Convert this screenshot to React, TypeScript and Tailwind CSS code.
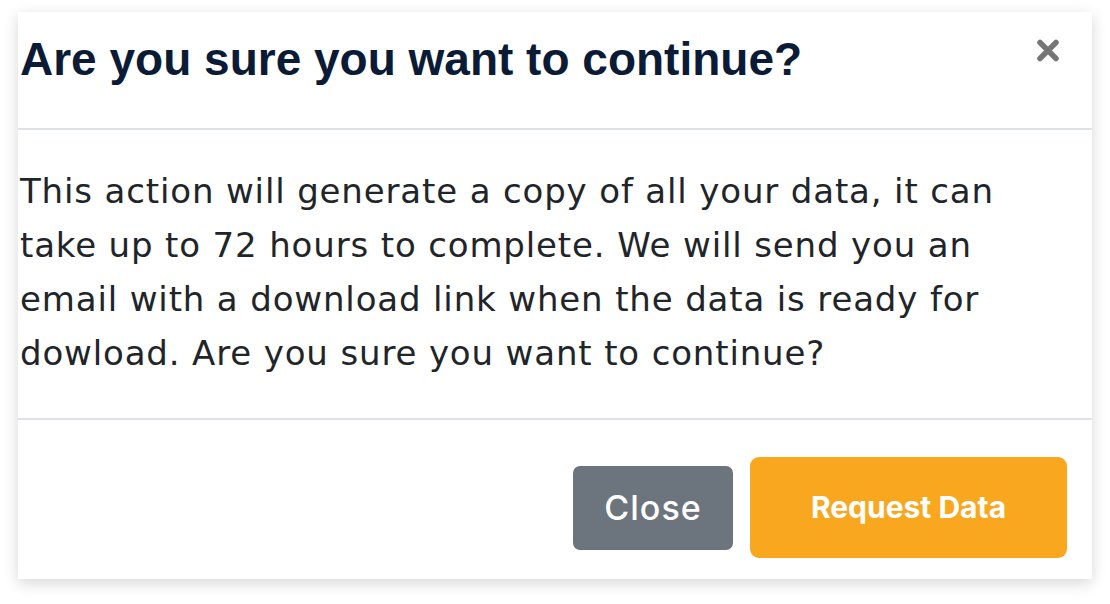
import React from "react";

function CloseIcon() {
  return (
    <svg width="26" height="25" viewBox="0 0 26 25" className="block">
      <path
        d="M5 4.5 L21 20.5 M21 4.5 L5 20.5"
        stroke="#767676"
        strokeWidth="5.5"
        strokeLinecap="round"
      />
    </svg>
  );
}

export default function App() {
  return (
    <div className="w-[1110px] h-[604px] bg-white pl-[18px] pt-[12px]">
      <div className="w-[1074px] h-[567px] bg-white flex flex-col shadow-[0_4px_14px_rgba(0,0,0,0.16)]">
        <div className="flex justify-between items-start pl-[2px] pr-[31px] pt-[24px] pb-[46px] border-b-2 border-[#dee2e6]">
          <h2 className="font-['Liberation_Sans',Arial,sans-serif] font-bold text-[46px] leading-[46px] text-[#0c1b35]">
            Are you sure you want to continue?
          </h2>
          <button className="mt-[2px]">
            <CloseIcon />
          </button>
        </div>
        <div className="pl-[2px] pt-[34px] pb-[38px] border-b-2 border-[#dee2e6]">
          <p className="w-[1030px] font-['DejaVu_Sans',sans-serif] text-[34px] leading-[54px] tracking-[0.025em] text-[#212529]">
            This action will generate a copy of all your data, it can take up
            to 72 hours to complete. We will send you an email with a download
            link when the data is ready for dowload. Are you sure you want to
            continue?
          </p>
        </div>
        <div className="flex-1 flex justify-end items-start pr-[25px] pt-[37px]">
          <div className="flex items-center gap-[17px]">
            <button className="w-[160px] h-[84px] rounded-[7px] bg-[#6c757d] text-white font-['Inter',sans-serif] font-medium text-[34px] tracking-[0.03em]">
              Close
            </button>
            <button className="w-[317px] h-[101px] rounded-[9px] bg-[#f8a71e] text-white font-['Inter',sans-serif] font-bold text-[30px]">
              Request Data
            </button>
          </div>
        </div>
      </div>
    </div>
  );
}
